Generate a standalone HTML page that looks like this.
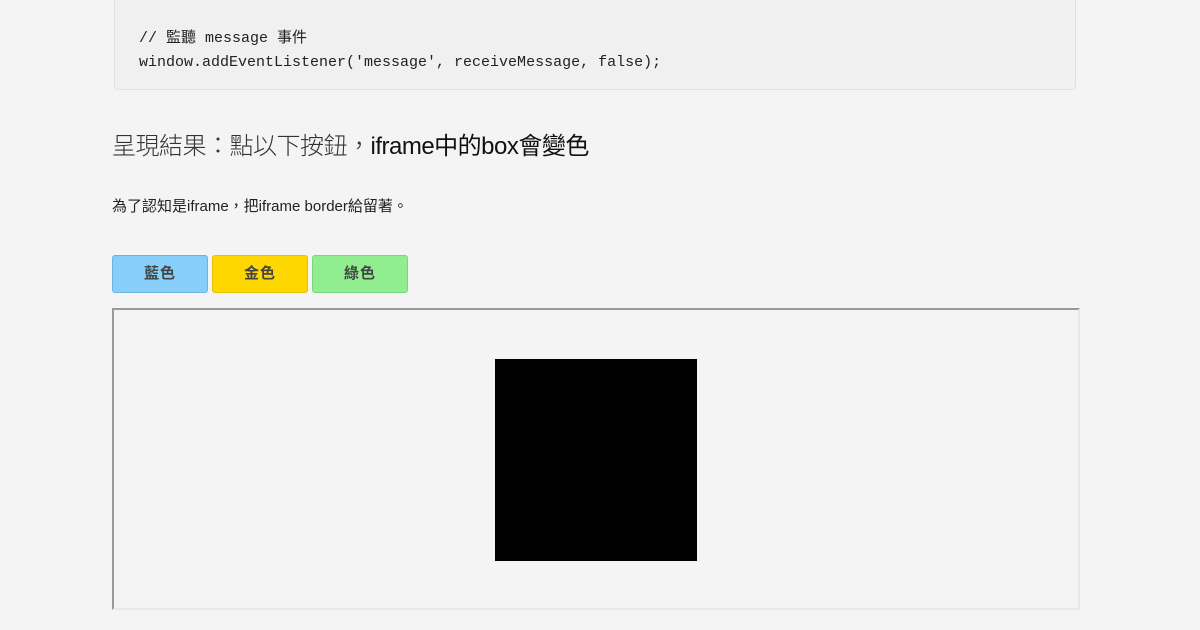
<!DOCTYPE html>
<html><head><meta charset="utf-8"><style>
body{margin:0;background:#f4f4f4;width:1200px;height:630px;overflow:hidden;position:relative;font-family:"Liberation Sans","Noto Sans CJK TC",sans-serif;color:#222}
.code{position:absolute;left:114px;top:-10px;width:962px;height:100px;background:#f0f0f0;border:1px solid #e0e0e0;border-radius:4px;box-sizing:border-box}
.code pre{margin:0;position:absolute;left:24px;top:36px;font-family:"Liberation Mono","Noto Sans CJK TC",monospace;font-size:15px;line-height:24px;color:#222}
h2{position:absolute;left:112px;top:126px;margin:0;font-weight:300;font-size:24px;color:#333;letter-spacing:-0.5px}
p{position:absolute;left:112px;top:195px;margin:0;font-size:15px;letter-spacing:0}
.b{position:absolute;top:255px;width:96px;height:38px;box-sizing:border-box;border-radius:3px;text-align:center;line-height:36px;font-size:15px;font-weight:bold;color:#444;letter-spacing:1px}
.f{position:absolute;left:112px;top:308px;width:968px;height:302px;box-sizing:border-box;border-style:solid;border-width:2px;border-color:#999 #e8e8e8 #e8e8e8 #999}
.k{position:absolute;left:495px;top:359px;width:202px;height:202px;background:#000}
</style></head><body>
<div class="code"><pre>// 監聽 message 事件
window.addEventListener('message', receiveMessage, false);</pre></div>
<h2>呈現結果：點以下按鈕，<span style="color:#111;font-weight:400">iframe中的box會變色</span></h2>
<p>為了認知是iframe，把iframe border給留著。</p>
<div class="b" style="left:112px;background:#87cefa;border:1px solid #6cb4e4">藍色</div>
<div class="b" style="left:212px;background:#ffd700;border:1px solid #e8c000">金色</div>
<div class="b" style="left:312px;background:#90ee90;border:1px solid #78d878">綠色</div>
<div class="f"></div>
<div class="k"></div>
</body></html>
